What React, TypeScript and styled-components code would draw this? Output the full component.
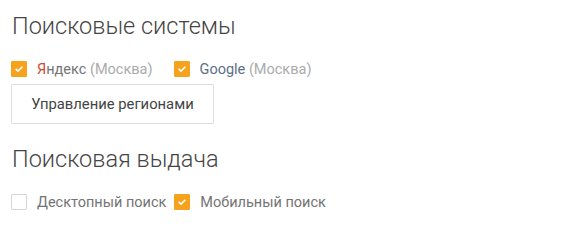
import React from "react";
import styled, { createGlobalStyle } from "styled-components";

const GlobalStyle = createGlobalStyle`
  html, body {
    margin: 0;
    padding: 0;
    background: #fff;
  }
  body {
    font-family: Roboto, "Liberation Sans", Arial, sans-serif;
  }
`;

type CheckProps = { checked?: boolean };

const Check = ({ checked }: CheckProps) => (
  <Box $checked={checked}>
    {checked && (
      <svg width="10" height="8" viewBox="0 0 10 8">
        <path d="M1.6 3.9 L4 6.1 L8.4 1.8" fill="none" stroke="#fff" strokeWidth="1.6" />
      </svg>
    )}
  </Box>
);

const App = () => {
  return (
    <Page>
      <GlobalStyle />
      <Section>
        <Title>Поисковые системы</Title>
        <Row $gap={21}>
          <Option>
            <Check checked />
            <Label>
              <Ya>Я</Ya>ндекс <Region>(Москва)</Region>
            </Label>
          </Option>
          <Option>
            <Check checked />
            <Label>
              <Goo>Google</Goo> <Region>(Москва)</Region>
            </Label>
          </Option>
        </Row>
        <Button>Управление регионами</Button>
      </Section>
      <Section>
        <Title>Поисковая выдача</Title>
        <Row $gap={8}>
          <Option>
            <Check />
            <Label>Десктопный поиск</Label>
          </Option>
          <Option>
            <Check checked />
            <Label>Мобильный поиск</Label>
          </Option>
        </Row>
      </Section>
    </Page>
  );
};

const Page = styled.div`
  display: flex;
  flex-direction: column;
  gap: 21px;
  padding: 12px 0 0 11px;
`;

const Section = styled.div`
  display: flex;
  flex-direction: column;
  align-items: flex-start;
`;

const Title = styled.h2`
  margin: 0 0 0 1px;
  font-size: 23.5px;
  line-height: 28px;
  font-weight: 300;
  color: #444;
`;

const Row = styled.div<{ $gap: number }>`
  display: flex;
  align-items: center;
  gap: ${(p) => p.$gap}px;
  height: 20px;
  margin: 19px 0 5px;
`;

const Option = styled.label`
  display: flex;
  align-items: center;
  gap: 10px;
`;

const Box = styled.span<{ $checked?: boolean }>`
  box-sizing: border-box;
  width: 16px;
  height: 16px;
  display: flex;
  align-items: center;
  justify-content: center;
  border: 1px solid ${(p) => (p.$checked ? "#f6a21d" : "#d6d6d6")};
  background: ${(p) => (p.$checked ? "#f6a21d" : "#fff")};
  border-radius: 1px;
`;

const Label = styled.span`
  font-size: 14.5px;
  color: #747474;
  white-space: nowrap;
`;

const Ya = styled.span`
  color: #cf4a35;
`;

const Goo = styled.span`
  color: #5c6f85;
`;

const Region = styled.span`
  color: #ababab;
`;

const Button = styled.button`
  box-sizing: border-box;
  width: 203px;
  height: 40px;
  background: #fff;
  border: 1px solid #dedede;
  border-radius: 1px;
  font-family: inherit;
  font-size: 14.8px;
  color: #444;
  cursor: pointer;
`;

export default App;
